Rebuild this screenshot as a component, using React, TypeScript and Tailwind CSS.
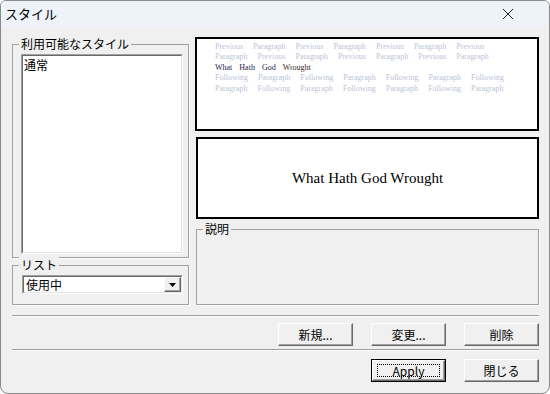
import React from "react";

const ui = { fontFamily: '"Noto Sans CJK JP", "Noto Sans", sans-serif' };
const serif = { fontFamily: '"Liberation Serif", "DejaVu Serif", serif' };

function Btn({ label, def }: { label: string; def?: boolean }) {
  return (
    <div
      className={
        "w-[75px] h-[23px] " + (def ? "border border-black" : "")
      }
    >
      <div className="w-full h-full border border-t-white border-l-white border-b-[#696969] border-r-[#696969] bg-[#f0f0f0] shadow-[inset_-1px_-1px_0_#a0a0a0] flex items-center justify-center">
        <div
          className={
            "flex items-center justify-center text-[12px] leading-none text-black " +
            (def ? "border border-dotted border-black w-[63px] h-[13px]" : "")
          }
          style={ui}
        >
          {label}
        </div>
      </div>
    </div>
  );
}

function Group({
  label,
  className,
  children,
}: {
  label: string;
  className: string;
  children?: React.ReactNode;
}) {
  return (
    <div className={"relative border border-[#a0a0a0] shadow-[1px_1px_0_#fff] " + className}>
      <span
        className="absolute -top-[9px] left-[6px] bg-[#f0f0f0] px-[2px] text-[12px] leading-[16px] text-black"
        style={ui}
      >
        {label}
      </span>
      {children}
    </div>
  );
}

function Sunken({ className, children }: { className: string; children?: React.ReactNode }) {
  return (
    <div className={"border border-t-[#a0a0a0] border-l-[#a0a0a0] border-b-white border-r-white " + className}>
      <div className="w-full h-full border border-t-[#696969] border-l-[#696969] border-b-[#e3e3e3] border-r-[#e3e3e3] bg-white">
        {children}
      </div>
    </div>
  );
}

const light = "text-[#bcc3d8]";

function Line({ words, dark }: { words: string[]; dark?: boolean }) {
  return (
    <div className={"flex whitespace-nowrap " + (dark ? "gap-[7px]" : "gap-[10px]")}>
      {words.map((w, i) => (
        <span key={i} className={dark ? (w === "Wrought" ? "text-[#3a2a20]" : "text-[#1c2650]") : light}>
          {w}
        </span>
      ))}
    </div>
  );
}

export default function App() {
  return (
    <div className="w-[550px] h-[394px] bg-white">
      <div className="w-[550px] h-[394px] border border-[#8a8a8a] rounded-t-[6px] rounded-b-[8px] bg-[#f0f0f0] flex flex-col overflow-hidden">
        {/* title bar */}
        <div className="h-[25px] bg-[#eef3f9] flex items-center justify-between pl-[4px] pr-[35px]">
          <span className="text-[13px] text-black" style={ui}>
            スタイル
          </span>
          <svg width="12" height="12" viewBox="0 0 12 12">
            <path d="M1 1 L11 11 M11 1 L1 11" stroke="#222" strokeWidth="1" />
          </svg>
        </div>

        {/* body */}
        <div className="flex flex-col pl-[11px] pr-[10px] pt-[11px]">
          <div className="flex gap-[6px] h-[268px]">
            {/* left column */}
            <div className="w-[177px] flex flex-col">
              <Group label="利用可能なスタイル" className="mt-[7px] h-[215px] pl-[8px] pr-[5px] pt-[9px]">
                <Sunken className="h-[200px]">
                  <div className="pl-[1px] pt-[1px] text-[12px] leading-[16px] text-black" style={ui}>
                    通常
                  </div>
                </Sunken>
              </Group>
              <Group label="リスト" className="mt-[7px] h-[40px] pl-[9px] pr-[5px] pt-[9px]">
                <Sunken className="h-[19px]">
                  <div className="flex h-full items-stretch">
                    <div className="flex-1 pl-[2px] text-[12px] leading-[15px] text-black" style={ui}>
                      使用中
                    </div>
                    <div className="w-[17px] border border-t-white border-l-white border-b-[#696969] border-r-[#696969] bg-[#f0f0f0] shadow-[inset_-1px_-1px_0_#a0a0a0] flex items-center justify-center">
                      <svg width="7" height="4" viewBox="0 0 7 4">
                        <path d="M0 0 H7 L3.5 4 Z" fill="#000" />
                      </svg>
                    </div>
                  </div>
                </Sunken>
              </Group>
            </div>

            {/* right column */}
            <div className="flex-1 flex flex-col">
              <div className="h-[94px] border-2 border-black bg-white pl-[18px] pt-[3px] text-[8px] leading-[10.4px]" style={serif}>
                <Line words={["Previous", "Paragraph", "Previous", "Paragraph", "Previous", "Paragraph", "Previous"]} />
                <Line words={["Paragraph", "Previous", "Paragraph", "Previous", "Paragraph", "Previous", "Paragraph"]} />
                <Line dark words={["What", "Hath", "God", "Wrought"]} />
                <Line words={["Following", "Paragraph", "Following", "Paragraph", "Following", "Paragraph", "Following"]} />
                <Line words={["Paragraph", "Following", "Paragraph", "Following", "Paragraph", "Following", "Paragraph"]} />
              </div>
              <div className="ml-[1px] mt-[6px] h-[83px] border-2 border-black bg-white flex items-center justify-center">
                <span className="text-[15px] text-black" style={serif}>
                  What Hath God Wrought
                </span>
              </div>
              <Group label="説明" className="ml-[1px] mt-[10px] h-[76px]" />
            </div>
          </div>

          {/* separator */}
          <div className="mt-[10px] h-[2px] border-t border-[#a0a0a0] border-b border-b-white" />

          <div className="mt-[6px] flex justify-end gap-[18px]">
            <Btn label="新規..." />
            <Btn label="変更..." />
            <Btn label="削除" />
          </div>

          <div className="mt-[3px] h-[2px] border-t border-[#a0a0a0] border-b border-b-white" />

          <div className="mt-[8px] flex justify-end gap-[18px]">
            <Btn label="Apply" def />
            <Btn label="閉じる" />
          </div>
        </div>
      </div>
    </div>
  );
}
